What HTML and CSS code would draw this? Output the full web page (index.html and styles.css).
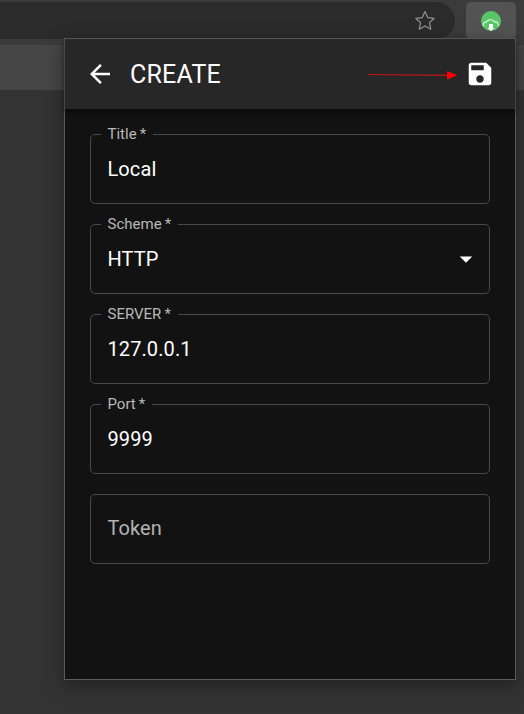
FILE: index.html
```html
<!DOCTYPE html>
<html lang="en">
<head>
<meta charset="utf-8">
<title>Create</title>
<link rel="stylesheet" href="styles.css">
</head>
<body>
<div class="toolbar">
  <div class="address">
    <svg class="star" viewBox="0 0 22 22"><path d="M11 1.600l2.700 6 6.600.7-4.900 4.400 1.400 6.500-5.800-3.300-5.800 3.300 1.400-6.500L1.700 8.300l6.600-.7z"/></svg>
  </div>
  <div class="extension">
    <svg class="cloud" viewBox="0 0 20 20">
      <circle cx="10" cy="10" r="10" fill="#5ac568"/>
      <path d="M3 15.200C1.200 13.500 2.500 10.900 5 11.400C6 8.300 12 7.600 13.300 11C16 10.200 18 12.500 17.300 15" fill="none" stroke="#e5f7e7" stroke-width="1.100"/>
      <path d="M8 13h4v4h1.500L10 20l-3.500-3H8z" fill="#fff"/>
    </svg>
  </div>
</div>
<div class="strip"></div>
<main class="popup">
  <header class="appbar">
    <svg class="icon" viewBox="0 0 24 24"><path d="M20 11H7.830l5.590-5.590L12 4l-8 8 8 8 1.410-1.410L7.830 13H20v-2z"/></svg>
    <h1 class="title">CREATE</h1>
    <svg class="arrow" viewBox="0 0 90 10"><path d="M0 4.500L80 5.300" stroke="#c31414" stroke-width="1.200"/><path d="M79 1L89.500 5.300L79 9.500z" fill="#f00"/></svg>
    <svg class="icon" viewBox="0 0 24 24"><path d="M17 3H5c-1.110 0-2 .9-2 2v14c0 1.100.89 2 2 2h14c1.100 0 2-.9 2-2V7l-4-4zm-5 16c-1.660 0-3-1.340-3-3s1.340-3 3-3 3 1.340 3 3-1.340 3-3 3zm3-10H5V5h10v4z"/></svg>
  </header>
  <form class="form">
    <fieldset class="field"><legend>Title&thinsp;*</legend><span class="value">Local</span></fieldset>
    <fieldset class="field"><legend>Scheme&thinsp;*</legend><span class="value">HTTP</span><svg class="icon" viewBox="0 0 24 24"><path d="M7 10l5 5 5-5z"/></svg></fieldset>
    <fieldset class="field"><legend>SERVER&thinsp;*</legend><span class="value">127.0.0.1</span></fieldset>
    <fieldset class="field"><legend>Port&thinsp;*</legend><span class="value">9999</span></fieldset>
    <div class="field empty"><span class="value">Token</span></div>
  </form>
</main>
</body>
</html>
```
FILE: styles.css
```css
* { box-sizing: border-box; }
body {
  margin: 0;
  height: 714px;
  overflow: hidden;
  background: #333;
  font-family: Roboto, "Liberation Sans", sans-serif;
  color: #fff;
}
svg { display: block; flex: none; }
.toolbar {
  display: flex;
  gap: 11px;
  height: 45px;
  padding-top: 2px;
  background: #3b3b3b;
}
.address {
  width: 455px;
  height: 37px;
  padding: 8px 19px 0 0;
  display: flex;
  justify-content: flex-end;
  background: #2b2b2b;
  border-radius: 0 19px 19px 0;
}
.star { width: 22px; height: 22px; fill: none; stroke: #929292; stroke-width: 1.2; stroke-linejoin: round; }
.extension {
  width: 50px;
  height: 37px;
  padding: 9px 15px;
  background: #535353;
  border-radius: 5px;
}
.cloud { width: 20px; height: 20px; }
.strip { height: 45px; background: #464646; }
.popup {
  position: absolute;
  left: 64px;
  top: 38px;
  width: 452px;
  height: 642px;
  background: #121212;
  border: 1px solid #5a5a5a;
  box-shadow: 0 6px 18px rgba(0, 0, 0, .35);
}
.appbar {
  display: flex;
  align-items: center;
  height: 70px;
  padding: 0 20px;
  background: #272727;
  box-shadow: 0 3px 6px rgba(0, 0, 0, .5);
}
.icon { width: 30px; height: 30px; fill: #fff; }
.title { margin: 0 0 0 15px; padding-top: 2px; font-size: 25px; font-weight: 400; line-height: 40px; letter-spacing: .19px; }
.arrow { width: 90px; height: 10px; margin: 2px 7px 0 auto; }
.form { display: flex; flex-direction: column; gap: 20px; padding: 25px 25px 0; }
.field {
  display: flex;
  align-items: center;
  justify-content: space-between;
  min-width: 0;
  height: 70px;
  margin: 0;
  padding: 0 8px 0 10px;
  border: 1px solid #494949;
  border-radius: 5px;
}
fieldset.field { height: 79px; margin-top: -9px; padding-top: 11px; }
legend { height: 18px; padding: 0 7px 0 6.5px; font-size: 15px; line-height: 18px; color: #b8b8b8; }
.value { padding-left: 6.5px; font-size: 20px; line-height: 30px; letter-spacing: .09px; }
.empty .value { margin-top: -2px; color: #b3b3b3; }
```
